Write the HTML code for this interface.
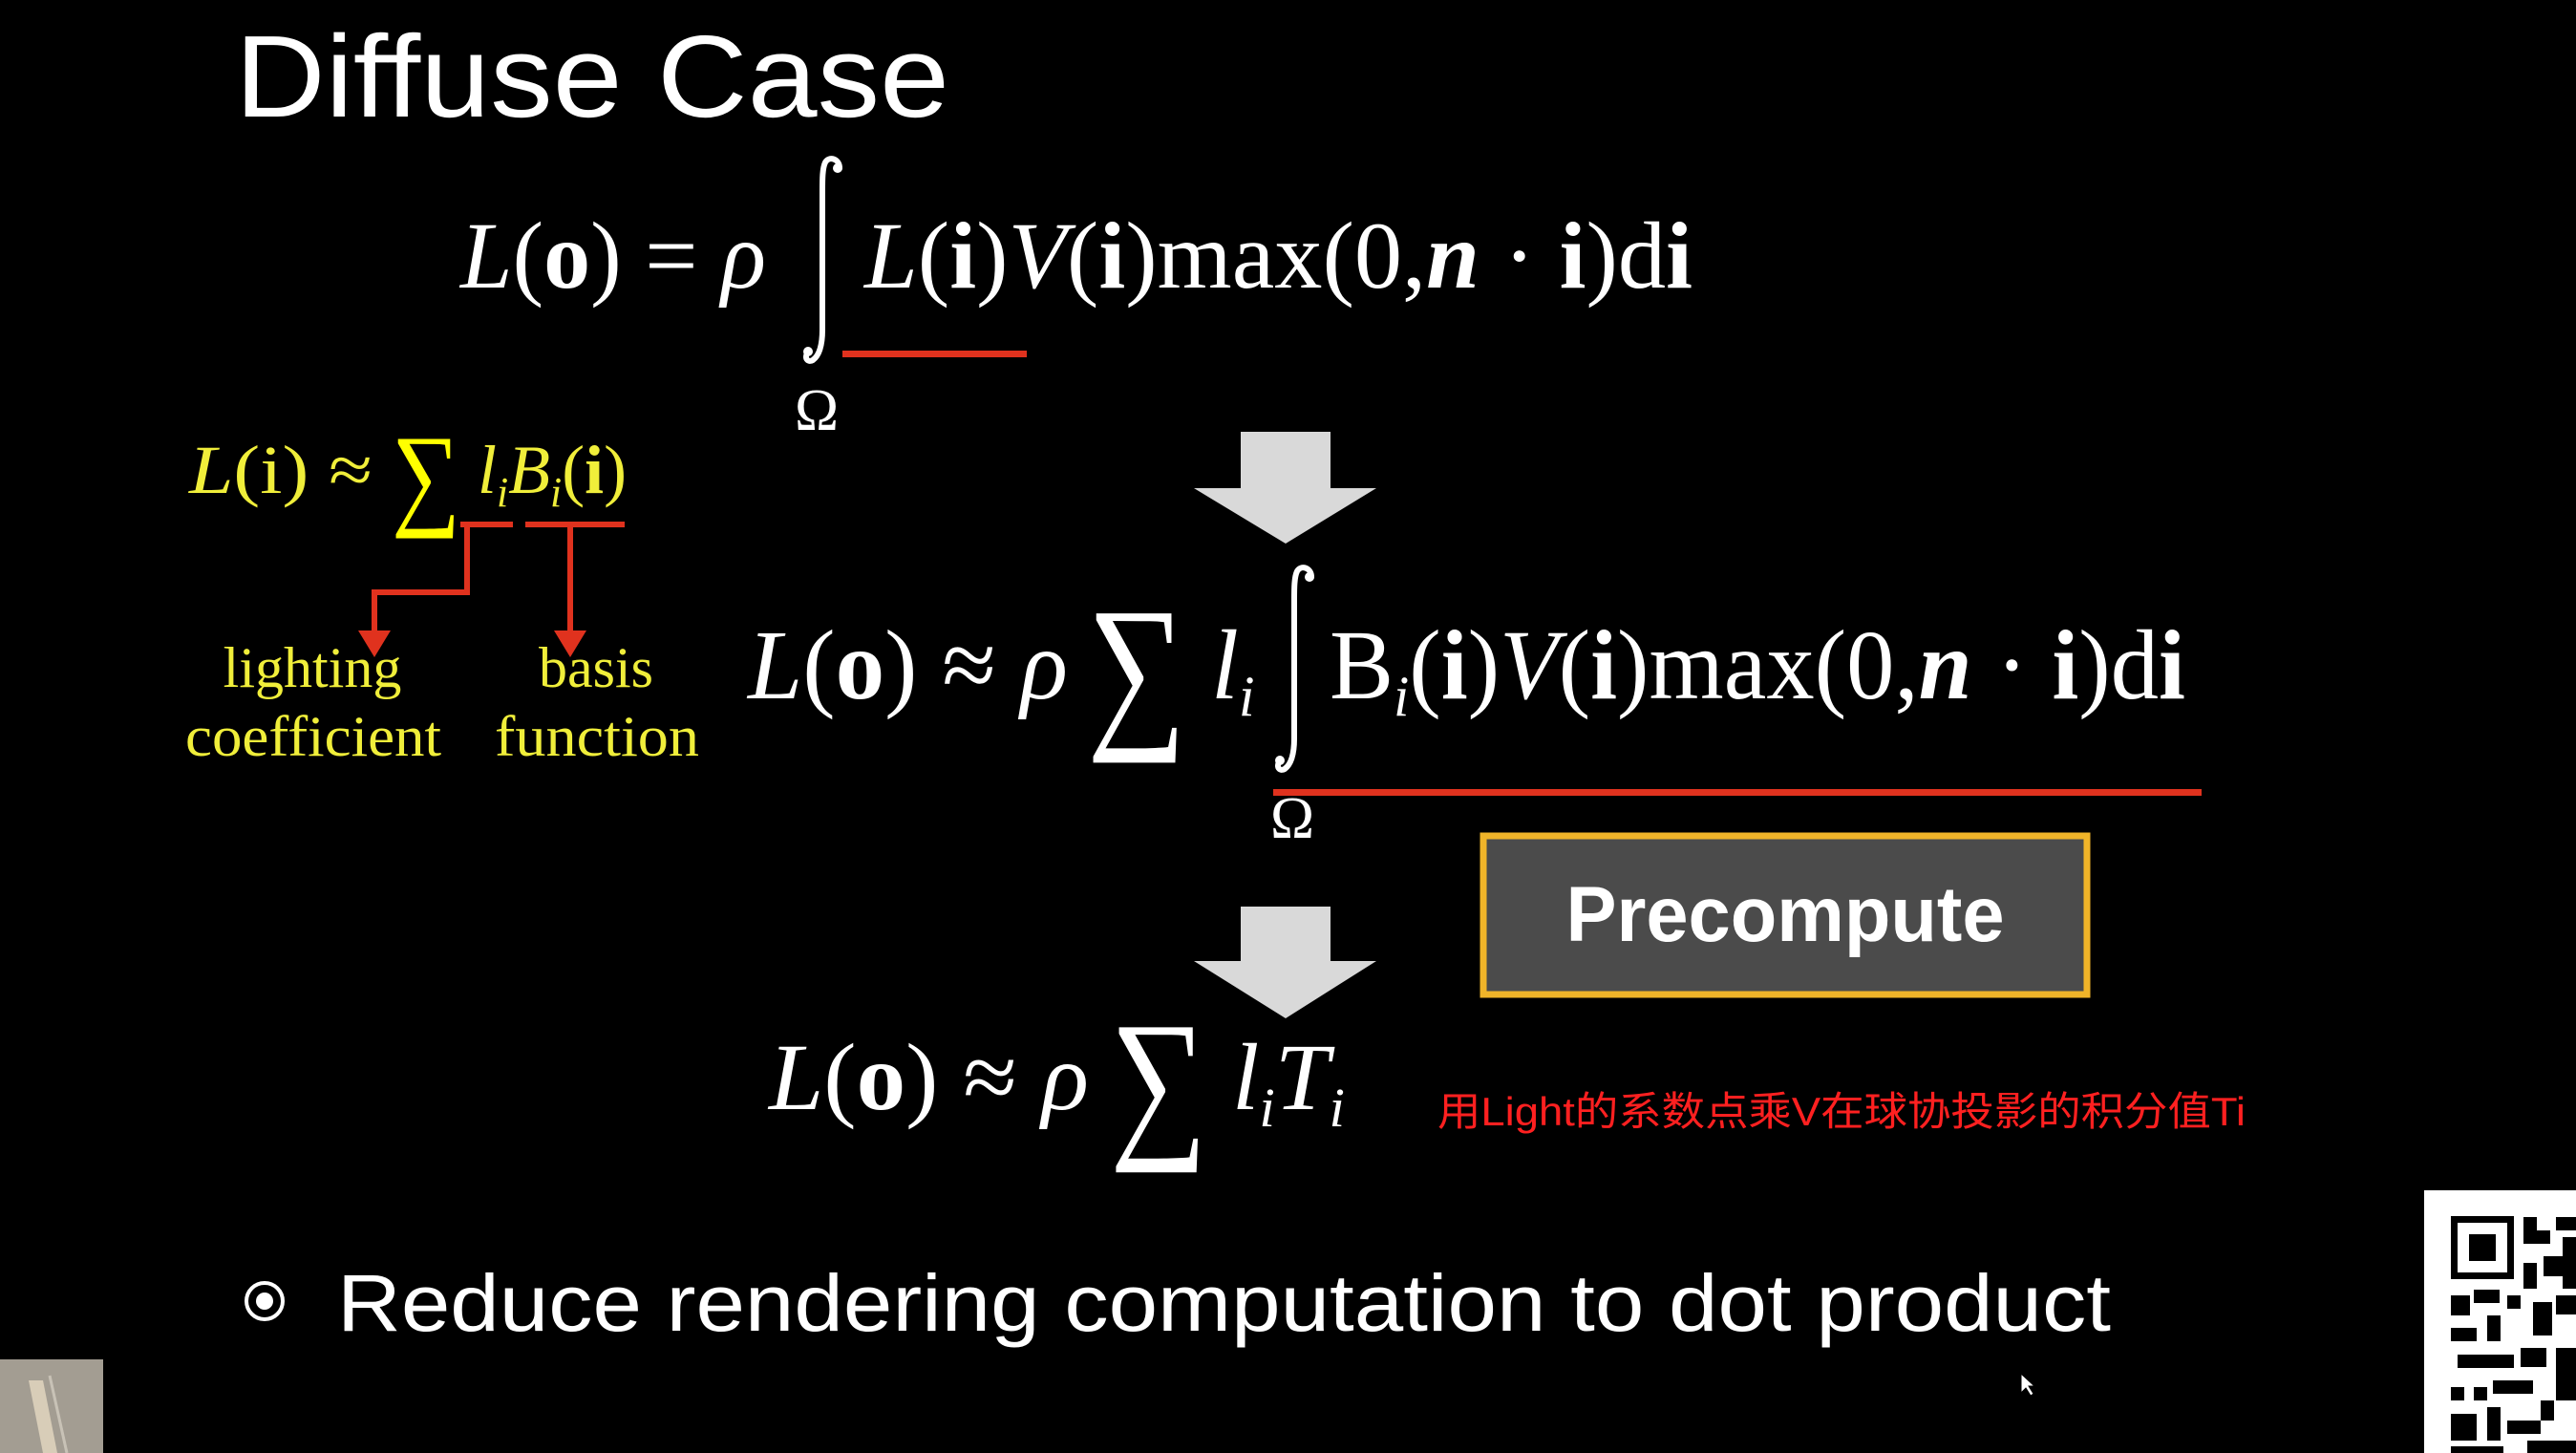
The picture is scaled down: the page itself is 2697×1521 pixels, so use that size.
<!DOCTYPE html>
<html><head><meta charset="utf-8"><style>
html,body{margin:0;padding:0;background:#000;width:2697px;height:1521px;overflow:hidden}
svg{display:block}
.m{font-family:"Liberation Serif",serif}
</style></head><body>
<svg width="2697" height="1521" viewBox="0 0 2697 1521" xmlns="http://www.w3.org/2000/svg">
<defs>
<g id="int">
<path d="M879,176 C879,166 868,163 864,170 C861,176 861,188 861,200 L861,345 C861,360 858,372 851,377 C846,380 842,375 845,370" fill="none" stroke="#fff" stroke-width="6" stroke-linecap="round"/>
<circle cx="877" cy="176" r="5" fill="#fff"/>
<circle cx="846" cy="368" r="5" fill="#fff"/>
</g>
</defs>
<rect width="2697" height="1521" fill="#000"/>
<!-- title -->
<text x="246" y="122" font-family="Liberation Sans, sans-serif" font-size="122" fill="#fff" textLength="748" lengthAdjust="spacingAndGlyphs">Diffuse Case</text>

<!-- eq1 -->
<g class="m" fill="#fff" font-size="100">
<text x="482" y="301" textLength="320" lengthAdjust="spacingAndGlyphs"><tspan font-style="italic">L</tspan>(<tspan font-weight="bold">o</tspan>) = <tspan font-style="italic">ρ</tspan></text>
<use href="#int"/>
<text x="905" y="301" textLength="867" lengthAdjust="spacingAndGlyphs"><tspan font-style="italic">L</tspan>(<tspan font-weight="bold">i</tspan>)<tspan font-style="italic">V</tspan>(<tspan font-weight="bold">i</tspan>)max(0,<tspan font-style="italic" font-weight="bold">n</tspan> · <tspan font-weight="bold">i</tspan>)d<tspan font-weight="bold">i</tspan></text>
<text x="832" y="450" font-size="62">Ω</text>
</g>
<rect x="882" y="367" width="193" height="7" fill="#e0321e"/>

<!-- yellow formula -->
<g class="m" fill="#f0ee3a" font-size="72">
<text x="198" y="516" textLength="192" lengthAdjust="spacingAndGlyphs"><tspan font-style="italic">L</tspan>(i) ≈</text>
<text x="410" y="538" font-size="120" fill="#ffff00" textLength="72" lengthAdjust="spacingAndGlyphs">∑</text>
<text x="500" y="516" textLength="156" lengthAdjust="spacingAndGlyphs"><tspan font-style="italic">l</tspan><tspan font-style="italic" font-size="44" dy="14">i</tspan><tspan font-style="italic" dy="-14">B</tspan><tspan font-style="italic" font-size="44" dy="14">i</tspan><tspan dy="-14">(</tspan><tspan font-weight="bold">i</tspan>)</text>
</g>
<g stroke="#e0321e" stroke-width="6" fill="none">
<line x1="482" y1="549" x2="537" y2="549"/>
<line x1="550" y1="549" x2="654" y2="549"/>
<polyline points="489,549 489,620 392,620 392,670"/>
<line x1="597" y1="549" x2="597" y2="670"/>
</g>
<polygon points="375,660 409,660 392,688" fill="#e0321e"/>
<polygon points="580,660 614,660 597,688" fill="#e0321e"/>
<g class="m" fill="#f0ee3a" font-size="60">
<text x="327" y="719" text-anchor="middle">lighting</text>
<text x="194" y="791" textLength="268" lengthAdjust="spacingAndGlyphs">coefficient</text>
<text x="624" y="719" text-anchor="middle">basis</text>
<text x="518" y="791" textLength="214" lengthAdjust="spacingAndGlyphs">function</text>
</g>

<!-- arrow 1 -->
<polygon points="1299,452 1393,452 1393,511 1441,511 1346,569 1250,511 1299,511" fill="#d9d9d9"/>

<!-- eq2 -->
<g class="m" fill="#fff" font-size="104">
<text x="783" y="731" textLength="335" lengthAdjust="spacingAndGlyphs"><tspan font-style="italic">L</tspan>(<tspan font-weight="bold">o</tspan>) ≈ <tspan font-style="italic">ρ</tspan></text>
<text x="1138" y="760" font-size="180" textLength="104" lengthAdjust="spacingAndGlyphs">∑</text>
<text x="1268" y="731" font-style="italic">l<tspan font-size="60" dy="18">i</tspan></text>
<use href="#int" transform="translate(494,428)"/>
<text x="1392" y="731" textLength="896" lengthAdjust="spacingAndGlyphs">B<tspan font-style="italic" font-size="60" dy="18">i</tspan><tspan dy="-18">(</tspan><tspan font-weight="bold">i</tspan>)<tspan font-style="italic">V</tspan>(<tspan font-weight="bold">i</tspan>)max(0,<tspan font-style="italic" font-weight="bold">n</tspan> · <tspan font-weight="bold">i</tspan>)d<tspan font-weight="bold">i</tspan></text>
<text x="1330" y="877" font-size="62">Ω</text>
</g>
<rect x="1333" y="826" width="972" height="7" fill="#e0321e"/>

<!-- precompute -->
<rect x="1553" y="875" width="632" height="166" fill="#4b4b4b" stroke="#f0b429" stroke-width="7"/>
<text x="1869" y="985" text-anchor="middle" font-family="Liberation Sans, sans-serif" font-weight="bold" font-size="82" fill="#fff" textLength="459" lengthAdjust="spacingAndGlyphs">Precompute</text>

<!-- arrow 2 -->
<polygon points="1299,949 1393,949 1393,1006 1441,1006 1346,1066 1250,1006 1299,1006" fill="#d9d9d9"/>

<!-- eq3 -->
<g class="m" fill="#fff" font-size="100">
<text x="805" y="1161" textLength="335" lengthAdjust="spacingAndGlyphs"><tspan font-style="italic">L</tspan>(<tspan font-weight="bold">o</tspan>) ≈ <tspan font-style="italic">ρ</tspan></text>
<text x="1162" y="1190" font-size="175" textLength="102" lengthAdjust="spacingAndGlyphs">∑</text>
<text x="1290" y="1161" font-style="italic" textLength="118" lengthAdjust="spacingAndGlyphs">l<tspan font-size="58" dy="18">i</tspan><tspan dy="-18">T</tspan><tspan font-size="58" dy="18">i</tspan></text>
</g>
<text x="1505" y="1178" font-family="Liberation Sans, 'Noto Sans CJK SC', sans-serif" font-size="42" fill="#ff2020" textLength="846" lengthAdjust="spacingAndGlyphs">用Light的系数点乘V在球协投影的积分值Ti</text>

<!-- bullet -->
<circle cx="277" cy="1362" r="19" fill="none" stroke="#fff" stroke-width="4"/>
<circle cx="277" cy="1362" r="9" fill="#fff"/>
<text x="353" y="1393" font-family="Liberation Sans, sans-serif" font-size="84" fill="#fff" textLength="1857" lengthAdjust="spacingAndGlyphs">Reduce rendering computation to dot product</text>

<!-- thumbnail -->
<rect x="0" y="1423" width="108" height="98" fill="#a39d92"/>
<polygon points="30,1445 45,1445 60,1521 45,1521" fill="#d8cdb8"/>
<line x1="52" y1="1440" x2="70" y2="1521" stroke="#c8c2b6" stroke-width="3"/>

<!-- cursor -->
<polygon points="2116,1438 2116,1458 2121,1453 2126,1461 2129,1459 2124,1451 2130,1451" fill="#fff" stroke="#000" stroke-width="1"/>

<!-- QR -->
<rect x="2538" y="1246" width="159" height="275" fill="#fff"/>
<g fill="#000">
<rect x="2566" y="1273" width="66" height="66"/>
<rect x="2573" y="1280" width="52" height="52" fill="#fff"/>
<rect x="2585" y="1292" width="28" height="28"/>
<rect x="2642" y="1274" width="14" height="28"/>
<rect x="2656" y="1288" width="14" height="14"/>
<rect x="2676" y="1274" width="21" height="14"/>
<rect x="2663" y="1315" width="20" height="21"/>
<rect x="2683" y="1295" width="14" height="54"/>
<rect x="2642" y="1322" width="14" height="27"/>
<rect x="2566" y="1356" width="20" height="21"/>
<rect x="2590" y="1350" width="27" height="14"/>
<rect x="2625" y="1356" width="14" height="14"/>
<rect x="2566" y="1390" width="27" height="14"/>
<rect x="2604" y="1377" width="14" height="27"/>
<rect x="2652" y="1363" width="20" height="35"/>
<rect x="2676" y="1356" width="21" height="20"/>
<rect x="2573" y="1418" width="59" height="14"/>
<rect x="2639" y="1411" width="27" height="20"/>
<rect x="2566" y="1452" width="14" height="14"/>
<rect x="2590" y="1452" width="14" height="14"/>
<rect x="2610" y="1445" width="42" height="14"/>
<rect x="2676" y="1411" width="21" height="55"/>
<rect x="2566" y="1480" width="27" height="28"/>
<rect x="2604" y="1473" width="14" height="35"/>
<rect x="2625" y="1487" width="35" height="14"/>
<rect x="2660" y="1466" width="14" height="21"/>
<rect x="2566" y="1514" width="55" height="7"/>
<rect x="2646" y="1508" width="51" height="13"/>
</g>
</svg>
</body></html>
